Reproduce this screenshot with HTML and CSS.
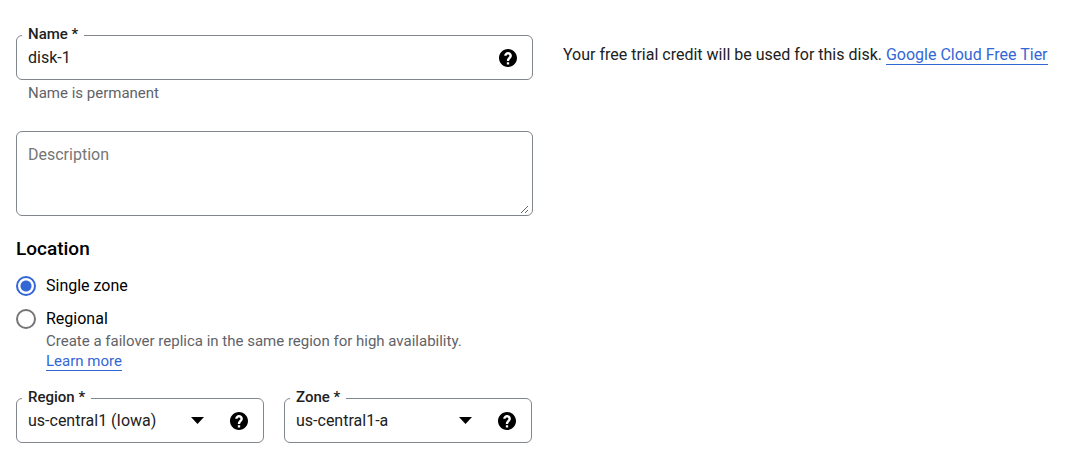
FILE: index.html
```html
<!DOCTYPE html>
<html lang="en">
<head>
  <meta charset="UTF-8" />
  <meta name="viewport" content="width=device-width, initial-scale=1.0"/>
  <title>Create a disk</title>
  <link rel="stylesheet" href="styles.css">
</head>
<body>
  <svg class="sprite" aria-hidden="true">
    <symbol id="icon-help" viewBox="2 2 20 20">
      <path d="M12 2C6.48 2 2 6.48 2 12s4.48 10 10 10 10-4.48 10-10S17.52 2 12 2zm1.3 17.3h-2.6v-2.6h2.6v2.6zm2-7.2l-.9.9c-.72.73-1.1 1.2-1.1 2.4h-2.6v-.6c0-1.1.45-2.1 1.17-2.83l1.24-1.26c.3-.3.5-.7.5-1.1 0-.9-.7-1.6-1.6-1.6s-1.6.7-1.6 1.6H7.8c0-2.4 1.9-4.3 4.2-4.3s4.3 1.9 4.3 4.2c0 1-.4 1.9-1 2.6z"/>
    </symbol>
    <symbol id="icon-arrow" viewBox="0 0 13 7">
      <path d="M0 0h13L6.5 7z"/>
    </symbol>
  </svg>

  <main class="page">
    <form class="disk-form">
      <div class="field">
        <label class="field-label" for="name">Name *</label>
        <input class="field-input" type="text" id="name" value="disk-1" required/>
        <button class="help-btn" type="button" aria-label="Help for name">
          <svg class="help-icon"><use href="#icon-help"/></svg>
        </button>
      </div>
      <p class="hint">Name is permanent</p>

      <div class="field field-area">
        <textarea class="field-textarea" id="description" placeholder="Description" aria-label="Description"></textarea>
      </div>

      <h2>Location</h2>

      <div class="option">
        <input type="radio" name="location" id="single" checked/>
        <label for="single">Single zone</label>
      </div>
      <div class="option">
        <input type="radio" name="location" id="regional"/>
        <label for="regional">Regional</label>
      </div>
      <p class="option-hint">
        Create a failover replica in the same region for high availability.<br>
        <a href="#">Learn more</a>
      </p>

      <div class="selects">
        <div class="field">
          <label class="field-label" for="region">Region *</label>
          <select class="field-input field-select" id="region">
            <option>us-central1 (Iowa)</option>
          </select>
          <svg class="arrow-icon" aria-hidden="true"><use href="#icon-arrow"/></svg>
          <button class="help-btn" type="button" aria-label="Help for region">
            <svg class="help-icon"><use href="#icon-help"/></svg>
          </button>
        </div>
        <div class="field">
          <label class="field-label" for="zone">Zone *</label>
          <select class="field-input field-select" id="zone">
            <option>us-central1-a</option>
          </select>
          <svg class="arrow-icon" aria-hidden="true"><use href="#icon-arrow"/></svg>
          <button class="help-btn" type="button" aria-label="Help for zone">
            <svg class="help-icon"><use href="#icon-help"/></svg>
          </button>
        </div>
      </div>
    </form>

    <aside class="notice">
      Your free trial credit will be used for this disk. <a href="#">Google Cloud Free Tier</a>
    </aside>
  </main>
</body>
</html>
```

FILE: styles.css
```css
* {
  box-sizing: border-box;
}

body {
  margin: 0;
  font-family: Roboto, Arial, sans-serif;
  font-size: 16px;
  line-height: 24px;
  color: #212121;
  background: #fff;
}

a {
  color: #3367d6;
  text-decoration: none;
  border-bottom: 1px solid #3367d6;
}

.sprite {
  display: none;
}

.page {
  display: grid;
  grid-template-columns: 1fr 1fr;
  gap: 30px;
  padding: 35px 9px 24px 16px;
}

/* Outlined fields */
.field {
  position: relative;
  display: flex;
  align-items: center;
  height: 45px;
  padding: 0 15px 0 11px;
  border: 1px solid #80868b;
  border-radius: 6px;
}

.field-label {
  position: absolute;
  top: -10px;
  left: 5px;
  padding: 0 6px;
  font-size: 15px;
  font-weight: 500;
  line-height: 16px;
  background: #fff;
}

.field-input,
.field-textarea {
  flex: 1;
  min-width: 0;
  padding: 0;
  border: none;
  outline: none;
  background: none;
  font: inherit;
  color: inherit;
}

.field-select {
  appearance: none;
}

.arrow-icon {
  width: 13px;
  height: 7px;
  margin-right: 26px;
  fill: #000;
  pointer-events: none;
}

.help-btn {
  display: flex;
  padding: 0;
  border: none;
  background: none;
  cursor: pointer;
}

.help-icon {
  width: 18px;
  height: 18px;
  fill: #000;
}

.hint {
  margin: 3px 0 28px 12px;
  font-size: 15px;
  line-height: 20px;
  color: #5f6368;
}

.field-area {
  height: auto;
  padding: 11px 3px 1px 11px;
}

.field-textarea {
  height: 71px;
  resize: vertical;
}

.field-textarea::placeholder {
  color: #757575;
}

h2 {
  margin: 21px 0 13px;
  font-size: 19px;
  font-weight: 500;
  line-height: 24px;
  color: #000;
}

/* Radio options */
.option {
  display: flex;
  align-items: center;
  gap: 10px;
  margin-top: 9px;
  color: #000;
}

.option input {
  appearance: none;
  width: 20px;
  height: 20px;
  margin: 0;
  border: 2px solid #757575;
  border-radius: 50%;
}

.option input:checked {
  border-color: #3367d6;
  background: radial-gradient(circle, #3367d6 5px, transparent 6px);
}

.option-hint {
  margin: 0 0 27px 30px;
  font-size: 15px;
  line-height: 20px;
  color: #5f6368;
}

.selects {
  display: grid;
  grid-template-columns: 1fr 1fr;
  gap: 20px;
  padding-right: 1px;
}

.notice {
  padding-top: 8px;
}
```
